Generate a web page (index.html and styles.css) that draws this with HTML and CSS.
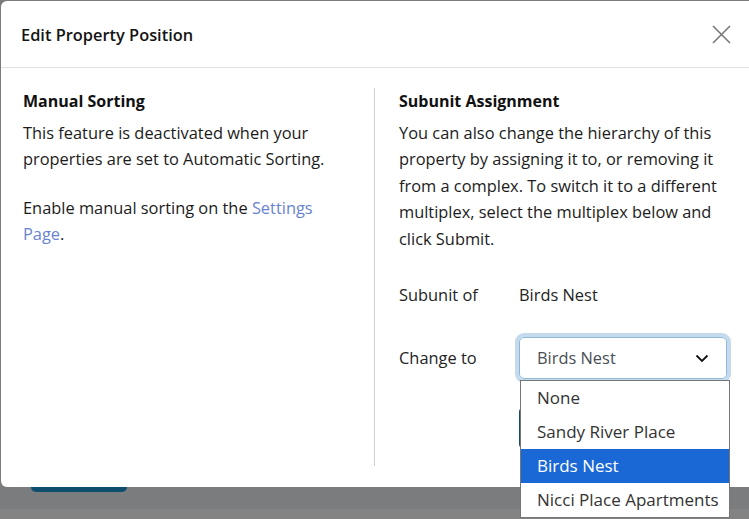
FILE: index.html
```html
<!DOCTYPE html>
<html lang="en">
<head>
    <meta charset="UTF-8">
    <meta name="viewport" content="width=device-width, initial-scale=1.0">
    <title>Edit Property Position</title>
    <link rel="stylesheet" href="styles.css">
</head>
<body>
    <!-- page behind the dialog, dimmed by the backdrop -->
    <div class="page">
        <div class="page-main">
            <span class="page-btn"></span>
        </div>
        <div class="page-foot"></div>
    </div>

    <div class="modal">
        <div class="modal-header">
            <h5 class="modal-title">Edit Property Position</h5>
            <button class="modal-close" aria-label="Close">
                <svg width="19" height="19" viewBox="0 0 19 19">
                    <path d="M1 1L18 18M18 1L1 18" stroke="#777" stroke-width="1.6" fill="none"/>
                </svg>
            </button>
        </div>

        <div class="modal-body">
            <section class="col col-left">
                <h3>Manual Sorting</h3>
                <p>This feature is deactivated when your properties are set to Automatic Sorting.</p>
                <p>Enable manual sorting on the <a href="#">Settings Page</a>.</p>
            </section>

            <section class="col col-right">
                <h3>Subunit Assignment</h3>
                <p>You can also change the hierarchy of this property by assigning it to, or removing it from a complex. To switch it to a different multiplex, select the multiplex below and click Submit.</p>

                <div class="assign">
                    <span class="assign-label">Subunit of</span>
                    <span class="assign-value">Birds Nest</span>

                    <span class="assign-label">Change to</span>
                    <div class="picker">
                        <div class="select">
                            <span>Birds Nest</span>
                            <svg width="14" height="9" viewBox="0 0 14 9">
                                <path d="M1.5 1.5L7 7L12.5 1.5" stroke="#111" stroke-width="1.8" fill="none"/>
                            </svg>
                        </div>
                        <ul class="options">
                            <li>None</li>
                            <li>Sandy River Place</li>
                            <li class="selected">Birds Nest</li>
                            <li>Nicci Place Apartments</li>
                        </ul>
                    </div>

                    <span></span>
                    <div><button class="submit" aria-label="Submit"></button></div>
                </div>
            </section>
        </div>
    </div>
</body>
</html>
```

FILE: styles.css
```css
* {
    margin: 0;
    padding: 0;
    box-sizing: border-box;
}

body {
    font-family: 'Open Sans', 'Noto Sans', sans-serif;
    background: #7b7c7d;
    color: #1c1c1c;
    height: 100vh;
    overflow: hidden;
}

.page {
    height: 100vh;
    display: flex;
    flex-direction: column;
}

.page-main {
    flex: 1;
    display: flex;
    align-items: flex-end;
    padding: 0 0 17px 31px;
}

.page-btn {
    width: 96px;
    height: 36px;
    background: #0f4d6c;
    border-radius: 5px;
}

.page-foot {
    height: 10px;
    background: #838383;
}

.modal {
    position: fixed;
    top: 1px;
    left: 1px;
    width: 748px;
    background: #fff;
    border-radius: 6px 0 0 6px;
}

.modal-header {
    height: 67px;
    display: flex;
    align-items: center;
    justify-content: space-between;
    padding: 0 18px 0 20px;
    border-bottom: 1px solid #dee2e6;
}

.modal-title {
    font-size: 16.4px;
    font-weight: 600;
    color: #141414;
}

.modal-close {
    border: 0;
    background: none;
    display: flex;
    cursor: pointer;
}

.modal-body {
    display: grid;
    grid-template-columns: 1fr 1fr;
    padding: 20px 22px 21px;
}

.col {
    min-height: 378px;
}

.col-left {
    padding-right: 23px;
    border-right: 1px solid #cfcfcf;
}

.col-right {
    padding-left: 24px;
}

.col h3 {
    font-size: 16px;
    font-weight: 700;
    line-height: 26px;
    margin-bottom: 6px;
    color: #111;
}

.col p {
    font-size: 16.4px;
    line-height: 26.4px;
    margin-bottom: 22px;
    color: #1c1c1c;
}

.col a {
    color: #6984d0;
    text-decoration: none;
}

.col-right p {
    margin-bottom: 30px;
}

.assign {
    display: grid;
    grid-template-columns: 120px 1fr;
    row-gap: 29px;
    align-items: center;
    font-size: 16.4px;
    line-height: 26px;
}

.assign-label,
.assign-value {
    color: #242424;
}

.picker {
    position: relative;
}

.select {
    height: 42px;
    display: flex;
    align-items: center;
    justify-content: space-between;
    padding: 0 17px;
    border: 1px solid #8db8d8;
    border-radius: 5px;
    box-shadow: 0 0 0 4px #c3dbec;
    color: #4a4f55;
    font-size: 16.4px;
}

.options {
    position: absolute;
    top: 43px;
    left: 1px;
    width: 210px;
    list-style: none;
    background: #fff;
    border: 1px solid #767676;
    z-index: 2;
}

.options li {
    height: 34px;
    line-height: 34px;
    padding-left: 16px;
    font-size: 17px;
    color: #333;
}

.options li.selected {
    background: #1a68d6;
    color: #fff;
}

.submit {
    width: 100px;
    height: 40px;
    border: 0;
    border-radius: 4px;
    background: #114e6e;
}
```
